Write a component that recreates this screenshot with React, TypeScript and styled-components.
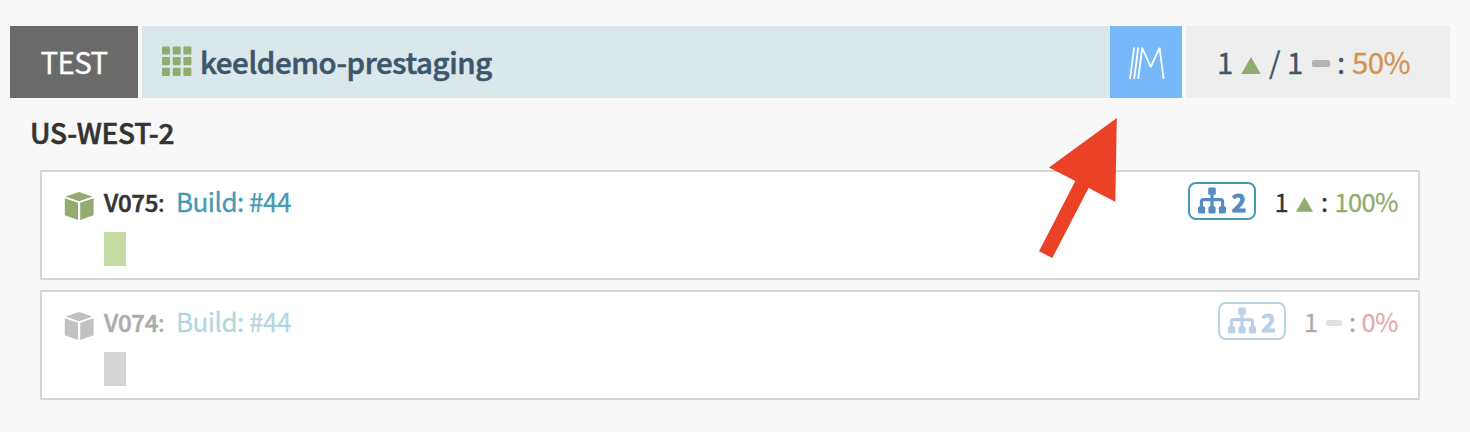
import React from "react";
import styled, { createGlobalStyle } from "styled-components";

const Global = createGlobalStyle`
  * { box-sizing: border-box; }
  body {
    margin: 0;
    background: #f8f8f8;
    color: #333;
    font-family: "Noto Sans CJK SC", "Noto Sans", sans-serif;
    -webkit-text-stroke: 0.3px currentColor;
    overflow: hidden;
  }
`;

const Page = styled.main`
  position: relative;
  height: 432px;
  padding: 26px 20px 0 10px;
`;

const Header = styled.header`
  display: flex;
  gap: 4px;
  height: 72px;
  font-size: 29.4px;
  line-height: 71px;
`;

const Account = styled.div`
  width: 128px;
  background: #6a6a6a;
  color: #fff;
  text-align: center;
  letter-spacing: -0.6px;
`;

const Cluster = styled.div`
  flex: 1;
  display: flex;
  background: #dae7eb;
  color: #3e566c;
`;

const ClusterTitle = styled.div`
  flex: 1;
  display: flex;
  align-items: flex-start;
  padding-left: 20px;
  font-weight: 500;
  letter-spacing: -0.36px;
  -webkit-text-stroke-width: 0.6px;
`;

const GridIcon = styled.svg`
  width: 30px;
  height: 30px;
  margin: 20px 8px 0 0;
  fill: #92ab71;
`;

const Managed = styled.div`
  width: 72px;
  background: #76b8f9;
`;

const Summary = styled.div`
  display: flex;
  width: 264px;
  padding-left: 31px;
  background: #eee;
  color: #3e566c;
`;

const Region = styled.h2`
  margin: 0 0 14px 20px;
  height: 58px;
  font-size: 28px;
  line-height: 69px;
  font-weight: 500;
  letter-spacing: -0.25px;
  -webkit-text-stroke-width: 0.6px;
`;

const Cards = styled.section`
  display: grid;
  gap: 10px;
  margin: 0 30px;
`;

const Card = styled.article`
  height: 110px;
  padding: 10px 20px 0 22px;
  background: #fff;
  border: 2px solid #d5d5d5;
`;

const CardRow = styled.div<{ $faded?: boolean }>`
  display: flex;
  height: 50px;
  opacity: ${(p) => (p.$faded ? 0.4 : 1)};
`;

const Cube = styled.svg<{ $color: string }>`
  width: 30px;
  height: 30px;
  margin: 9px 10px 0 0;
  fill: ${(p) => p.$color};
`;

const Version = styled.div`
  width: 72px;
  font-size: 24px;
  line-height: 40px;
  font-weight: 500;
  letter-spacing: -0.3px;
  -webkit-text-stroke-width: 0.6px;
`;

const Colon = styled.span`
  font-weight: 400;
  -webkit-text-stroke-width: 0.3px;
`;

const Build = styled.div`
  flex: 1;
  font-size: 26px;
  line-height: 38px;
  letter-spacing: -0.5px;
  color: #459bb1;
`;

const Badge = styled.div`
  display: flex;
  width: 68px;
  height: 38px;
  padding: 0 0 0 8px;
  border: 2px solid #459bb1;
  border-radius: 8px;
  color: #568ac4;
  font-size: 25px;
  line-height: 34px;
  font-weight: 700;
  -webkit-text-stroke-width: 0.8px;
`;

const TreeIcon = styled.svg`
  width: 28px;
  height: 28px;
  margin: 3px 5px 0 0;
`;

const Health = styled.div`
  display: flex;
  margin-left: 18px;
  font-size: 25.5px;
  line-height: 38px;
`;

const Instance = styled.div<{ $color: string }>`
  width: 22px;
  height: 34px;
  margin-left: 40px;
  background: ${(p) => p.$color};
`;

const Part = styled.span<{ $w?: number; $color?: string }>`
  width: ${(p) => (p.$w ? `${p.$w}px` : "auto")};
  color: ${(p) => p.$color ?? "inherit"};
  letter-spacing: ${(p) => (p.$color ? "-0.6px" : "0")};
  white-space: nowrap;
`;

const Up = styled.svg<{ $top: number; $size: number; $gap: number }>`
  width: ${(p) => p.$size}px;
  height: ${(p) => p.$size * 0.87}px;
  margin: ${(p) => p.$top}px ${(p) => p.$gap}px 0 0;
  fill: #92ab71;
`;

const Dash = styled.span<{ $top: number; $w: number; $gap: number }>`
  width: ${(p) => p.$w}px;
  height: ${(p) => p.$w * 0.39}px;
  margin: ${(p) => p.$top}px ${(p) => p.$gap}px 0 0;
  border-radius: 2px;
  background: #b3b3b3;
`;

const Pointer = styled.svg`
  position: absolute;
  left: 1030px;
  top: 110px;
  width: 100px;
  height: 160px;
`;

const Triangle = (p: { $top: number; $size: number; $gap: number }) => (
  <Up {...p} viewBox="0 0 20 17" preserveAspectRatio="none">
    <path d="M10 0 20 17H0z" />
  </Up>
);

const cells = [0, 10.7, 21.4];

function ServerGroup({
  version,
  color,
  instance,
  faded,
  children,
}: {
  version: string;
  color: string;
  instance: string;
  faded?: boolean;
  children: React.ReactNode;
}) {
  return (
    <Card>
      <CardRow $faded={faded}>
        <Cube $color={color} viewBox="0 0 30 30">
          <path d="M15 1 28.5 5.6 15 10.2 1.5 5.6z" />
          <path d="M.8 7.2 14 11.8V29L.8 24.3z" />
          <path d="M29.6 7.2 16.2 11.8V29L29.6 24.3z" />
        </Cube>
        <Version>
          {version}
          <Colon>:</Colon>
        </Version>
        <Build>Build: #44</Build>
        <Badge>
          <TreeIcon viewBox="0 0 28 28" fill="#568ac4">
            <rect x="10.2" y="0.5" width="7.6" height="7.2" rx="1.3" />
            <rect x="0" y="19.2" width="7.2" height="7.4" rx="1.7" />
            <rect x="10.4" y="19.2" width="7.2" height="7.4" rx="1.7" />
            <rect x="20.8" y="19.2" width="7.2" height="7.4" rx="1.7" />
            <path
              d="M14 7v13M3.4 20v-5.2q0-2.2 2.2-2.2h16.8q2.2 0 2.2 2.2V20"
              fill="none"
              stroke="#568ac4"
              strokeWidth="3.2"
            />
          </TreeIcon>
          2
        </Badge>
        <Health>{children}</Health>
      </CardRow>
      <Instance $color={instance} />
    </Card>
  );
}

export default function App() {
  return (
    <Page>
      <Global />
      <Header>
        <Account>TEST</Account>
        <Cluster>
          <ClusterTitle>
            <GridIcon viewBox="0 0 30 30">
              {cells.map((y) =>
                cells.map((x) => (
                  <rect key={`${x}-${y}`} x={x} y={y + 0.4} width="8" height="8.2" rx="1.2" />
                )),
              )}
            </GridIcon>
            keeldemo-prestaging
          </ClusterTitle>
          <Managed>
            <svg
              width="72"
              height="72"
              fill="none"
              stroke="#fff"
              strokeWidth="1.8"
              strokeLinejoin="bevel"
            >
              <path d="M20 52.8 24.2 21.5M24.2 52.8 28.2 21.5M28.2 52.8 32.2 21.8 40.7 41 49.6 21.8 53.6 52.8" />
            </svg>
          </Managed>
        </Cluster>
        <Summary>
          <Part $w={24}>1</Part>
          <Triangle $top={31} $size={20} $gap={8} />
          <Part $w={18}>/</Part>
          <Part $w={25}>1</Part>
          <Dash $top={34} $w={18} $gap={7} />
          <Part $w={15}>:</Part>
          <Part $color="#d6924e">50%</Part>
        </Summary>
      </Header>
      <Region>US-WEST-2</Region>
      <Cards>
        <ServerGroup version="V075" color="#92ab71" instance="#c6dba2">
          <Part $w={22}>1</Part>
          <Triangle $top={15} $size={17} $gap={7.5} />
          <Part $w={13.5}>:</Part>
          <Part $color="#92ab71">100%</Part>
        </ServerGroup>
        <ServerGroup version="V074" color="#666" instance="#d4d4d4" faded>
          <Part $w={22}>1</Part>
          <Dash $top={18} $w={16} $gap={7} />
          <Part $w={12.5}>:</Part>
          <Part $color="#b92f2c">0%</Part>
        </ServerGroup>
      </Cards>
      <Pointer viewBox="1030 110 100 160">
        <path
          d="M1116.8 118 1049 167.4 1075.3 181 1039 251.3 1052.3 258 1088.6 188 1115.3 201.7z"
          fill="#eb4127"
        />
      </Pointer>
    </Page>
  );
}
